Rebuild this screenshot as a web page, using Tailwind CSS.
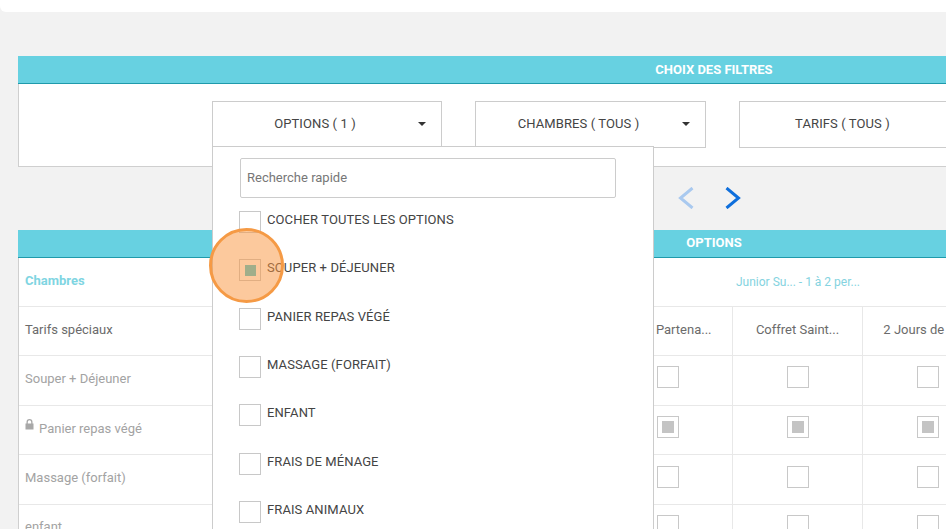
<!DOCTYPE html>
<html lang="fr">
<head>
<meta charset="utf-8">
<script src="https://cdn.jsdelivr.net/npm/@tailwindcss/browser@4"></script>
</head>
<body class="m-0">
<div class="relative w-[946px] h-[529px] overflow-hidden bg-[#f2f2f2] font-['Roboto',sans-serif] text-[13px] text-[#444]">
  <div class="h-[12px] bg-white rounded-bl-[6px]"></div>

  <section class="mt-[44px] ml-[18px] w-[1392px] h-[111px] bg-white border border-[#cfcfcf] border-t-0">
    <div class="h-[28px] -ml-px -mr-px bg-[#67d1e1] border-b border-[#1f9aab] flex items-center justify-center text-white text-[13px] font-bold">CHOIX DES FILTRES</div>
    <div class="flex gap-[33px] pl-[193px] pt-[17px] tracking-[0.1px]">
      <div class="relative w-[230px] h-[47px] border border-[#cccccc] flex items-center justify-center pr-[24px] pb-[2px]">OPTIONS ( 1 )<span class="absolute right-[15px] top-[20px] w-0 h-0 border-x-[4px] border-x-transparent border-t-[4px] border-t-[#333]"></span></div>
      <div class="relative w-[231px] h-[47px] border border-[#cccccc] flex items-center justify-center pr-[24px] pb-[2px]">CHAMBRES ( TOUS )<span class="absolute right-[15px] top-[20px] w-0 h-0 border-x-[4px] border-x-transparent border-t-[4px] border-t-[#333]"></span></div>
      <div class="relative w-[231px] h-[47px] border border-[#cccccc] flex items-center justify-center pr-[24px] pb-[2px]">TARIFS ( TOUS )<span class="absolute right-[15px] top-[20px] w-0 h-0 border-x-[4px] border-x-transparent border-t-[4px] border-t-[#333]"></span></div>
    </div>
  </section>

  <div class="h-[63px] w-[1392px] ml-[18px] flex items-center justify-center gap-[31px] pr-[10px] pb-[2px]">
    <svg class="w-[16px] h-[22px]" viewBox="0 0 16 22" fill="none" stroke="#a9c9ef" stroke-width="3"><path d="M14.5 1 L2.5 11 L14.5 21"/></svg>
    <svg class="w-[16px] h-[22px]" viewBox="0 0 16 22" fill="none" stroke="#0f6fdc" stroke-width="3"><path d="M1.5 1 L13.5 11 L1.5 21"/></svg>
  </div>

  <section class="ml-[18px] w-[1392px] bg-white border-l border-[#cfcfcf]">
    <div class="h-[28px] -ml-px bg-[#67d1e1] border-b border-[#1f9aab] flex items-center justify-center text-white text-[13px] font-bold pb-[1px]">OPTIONS</div>

    <div class="flex h-[49px] border-b border-[#e8e8e8]">
      <div class="w-[584px] flex items-center pl-[6px] pb-[3px] font-bold text-[#7fd5e2]">Chambres</div>
      <div class="w-[390px] flex items-center justify-center text-[12px] text-[#84d3e0]">Junior Su... - 1 à 2 per...</div>
    </div>

    <div class="flex h-[49px] border-b border-[#e8e8e8] text-[#6b6b6b]">
      <div class="w-[584px] flex items-center pl-[6px] pb-[2px]">Tarifs spéciaux</div>
      <div class="w-[130px] flex items-center justify-center border-r border-[#e8e8e8] pb-[2px]">Offre Partena...</div>
      <div class="w-[130px] flex items-center justify-center border-r border-[#e8e8e8] pb-[2px]">Coffret Saint...</div>
      <div class="w-[130px] flex items-center justify-center border-r border-[#e8e8e8] pb-[2px]">2 Jours de rêve</div>
    </div>

    <div class="flex h-[50px] border-b border-[#e8e8e8] text-[#a3a3a3]">
      <div class="w-[584px] flex items-center pl-[6px] pb-[4px]">Souper + Déjeuner</div>
      <div class="w-[130px] flex items-center justify-center border-r border-[#e8e8e8] pb-[7px]"><span class="block w-[22px] h-[22px] border border-[#c8c8c8] bg-white"></span></div>
      <div class="w-[130px] flex items-center justify-center border-r border-[#e8e8e8] pb-[7px]"><span class="block w-[22px] h-[22px] border border-[#c8c8c8] bg-white"></span></div>
      <div class="w-[130px] flex items-center justify-center border-r border-[#e8e8e8] pb-[7px]"><span class="block w-[22px] h-[22px] border border-[#c8c8c8] bg-white"></span></div>
    </div>

    <div class="flex h-[49px] border-b border-[#e8e8e8] text-[#a3a3a3]">
      <div class="w-[584px] flex items-center pl-[6px] pb-[2px]">
        <svg class="w-[9px] h-[11px] mb-[9px] mr-[5px]" viewBox="0 0 9 11"><path fill="#a8a8a8" d="M0.5 4.5h1V3a3 3 0 0 1 6 0v1.5h1v6h-8zM2.8 4.5h3.4V3a1.7 1.7 0 0 0-3.4 0z" fill-rule="evenodd"/></svg>
        <span>Panier repas végé</span>
      </div>
      <div class="w-[130px] flex items-center justify-center border-r border-[#e8e8e8] pb-[7px]"><span class="flex items-center justify-center w-[22px] h-[22px] border border-[#c8c8c8] bg-white"><span class="block w-[12px] h-[12px] bg-[#c4c4c4]"></span></span></div>
      <div class="w-[130px] flex items-center justify-center border-r border-[#e8e8e8] pb-[7px]"><span class="flex items-center justify-center w-[22px] h-[22px] border border-[#c8c8c8] bg-white"><span class="block w-[12px] h-[12px] bg-[#c4c4c4]"></span></span></div>
      <div class="w-[130px] flex items-center justify-center border-r border-[#e8e8e8] pb-[7px]"><span class="flex items-center justify-center w-[22px] h-[22px] border border-[#c8c8c8] bg-white"><span class="block w-[12px] h-[12px] bg-[#c4c4c4]"></span></span></div>
    </div>

    <div class="flex h-[50px] border-b border-[#e8e8e8] text-[#a3a3a3]">
      <div class="w-[584px] flex items-center pl-[6px] pb-[4px]">Massage (forfait)</div>
      <div class="w-[130px] flex items-center justify-center border-r border-[#e8e8e8] pb-[6px]"><span class="block w-[22px] h-[22px] border border-[#c8c8c8] bg-white"></span></div>
      <div class="w-[130px] flex items-center justify-center border-r border-[#e8e8e8] pb-[6px]"><span class="block w-[22px] h-[22px] border border-[#c8c8c8] bg-white"></span></div>
      <div class="w-[130px] flex items-center justify-center border-r border-[#e8e8e8] pb-[6px]"><span class="block w-[22px] h-[22px] border border-[#c8c8c8] bg-white"></span></div>
    </div>

    <div class="flex h-[49px] border-b border-[#e8e8e8] text-[#a3a3a3]">
      <div class="w-[584px] flex items-center pl-[6px] pb-[4px]">enfant</div>
      <div class="w-[130px] flex items-center justify-center border-r border-[#e8e8e8] pb-[7px]"><span class="block w-[22px] h-[22px] border border-[#c8c8c8] bg-white"></span></div>
      <div class="w-[130px] flex items-center justify-center border-r border-[#e8e8e8] pb-[7px]"><span class="block w-[22px] h-[22px] border border-[#c8c8c8] bg-white"></span></div>
      <div class="w-[130px] flex items-center justify-center border-r border-[#e8e8e8] pb-[7px]"><span class="block w-[22px] h-[22px] border border-[#c8c8c8] bg-white"></span></div>
    </div>
  </section>

  <!-- open dropdown -->
  <div class="absolute left-[212px] top-[146px] w-[442px] h-[400px] bg-white border border-[#cccccc] pl-[26px] pt-[11px]">
    <div class="ml-px w-[376px] h-[40px] border border-[#cccccc] rounded-[2px] flex items-center pl-[6px] text-[13px] text-[#777] mb-[13px]">Recherche rapide</div>
    <ul class="flex flex-col tracking-[0.1px]">
      <li class="flex h-[48px] gap-[6px]"><span class="block w-[22px] h-[22px] border border-[#c8c8c8] bg-white"></span><span class="leading-[18px] text-[#444]">COCHER TOUTES LES OPTIONS</span></li>
      <li class="flex h-[49px] gap-[6px]"><span class="flex items-center justify-center w-[22px] h-[22px] border border-[#c8c8c8] bg-white"><span class="block w-[11px] h-[11px] bg-[#47c9d9]"></span></span><span class="leading-[18px] text-[#444]">SOUPER + DÉJEUNER</span></li>
      <li class="flex h-[48px] gap-[6px]"><span class="block w-[22px] h-[22px] border border-[#c8c8c8] bg-white"></span><span class="leading-[18px] text-[#444]">PANIER REPAS VÉGÉ</span></li>
      <li class="flex h-[48px] gap-[6px]"><span class="block w-[22px] h-[22px] border border-[#c8c8c8] bg-white"></span><span class="leading-[18px] text-[#444]">MASSAGE (FORFAIT)</span></li>
      <li class="flex h-[49px] gap-[6px]"><span class="block w-[22px] h-[22px] border border-[#c8c8c8] bg-white"></span><span class="leading-[18px] text-[#444]">ENFANT</span></li>
      <li class="flex h-[48px] gap-[6px]"><span class="block w-[22px] h-[22px] border border-[#c8c8c8] bg-white"></span><span class="leading-[18px] text-[#444]">FRAIS DE MÉNAGE</span></li>
      <li class="flex h-[48px] gap-[6px]"><span class="block w-[22px] h-[22px] border border-[#c8c8c8] bg-white"></span><span class="leading-[18px] text-[#444]">FRAIS ANIMAUX</span></li>
    </ul>
  </div>

  <!-- click highlight -->
  <div class="absolute left-[209px] top-[228px] w-[75px] h-[75px] rounded-full bg-[#f9933b]/50 border-[3px] border-[#f59a45]"></div>
</div>
</body>
</html>
